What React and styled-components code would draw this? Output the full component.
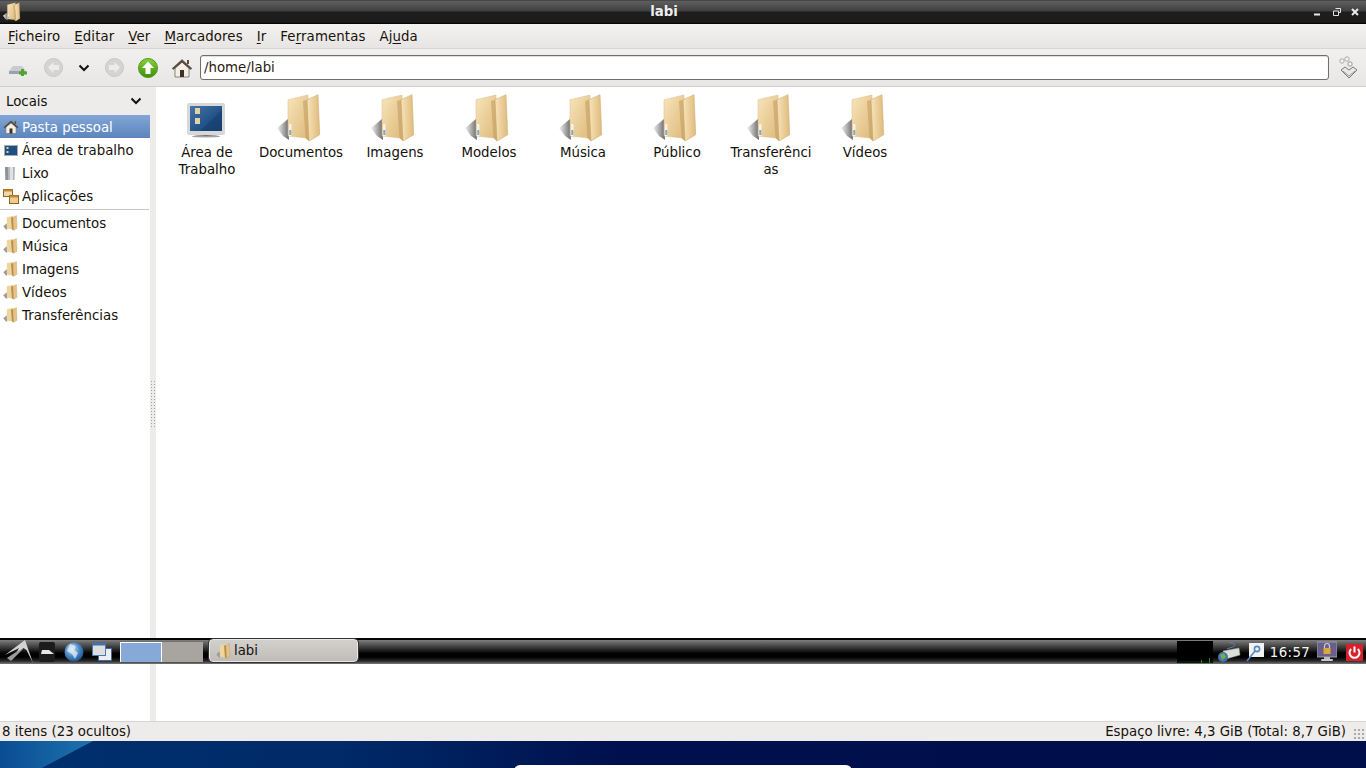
import React from "react";
import styled, { createGlobalStyle } from "styled-components";

const Global = createGlobalStyle`
  html, body { margin: 0; padding: 0; width: 1366px; height: 768px; overflow: hidden; background: #fff; }
  * { box-sizing: border-box; }
  body { font-family: "DejaVu Sans", sans-serif; font-size: 13.33px; color: #101010; }
  #root { height: 768px; }
`;

const Screen = styled.div`position: relative; width: 1366px; height: 768px; display: flex; flex-direction: column; overflow: hidden;`;
const Win = styled.div`height: 741px; display: flex; flex-direction: column; background: #edecea;`;

const TitleBar = styled.header`
  height: 24px; flex: none; position: relative; display: flex; align-items: center; justify-content: center; padding: 0 38px 2px 0;
  background: linear-gradient(#2f2f2f 0, #5e5e5e 1px, #565656 4px, #3f3f3f 11px, #1e1e1e 12px, #1c1c1c 22px, #000 24px);
  color: #eee; font-weight: 700; font-size: 13.33px;
`;
const TitleIcon = styled.span`position: absolute; left: 3px; top: 2px; display: flex;`;
const WinButtons = styled.div`position: absolute; right: 7px; top: 7px; display: flex; gap: 10px; align-items: center;`;

const MenuBar = styled.nav`
  height: 25px; flex: none; display: flex; align-items: center; padding: 1px 0 0 1px;
  background: linear-gradient(#f3f2f1, #e6e5e3); border-bottom: 1px solid #d6d5d2;
`;
const MenuItem = styled.span`
  padding: 0 7px; line-height: 22px; white-space: pre; color: #1a1208; letter-spacing: .1px;
  u { text-underline-offset: 2px; text-decoration-thickness: 1px; }
`;

const ToolBar = styled.div`
  height: 38px; flex: none; display: flex; align-items: center; background: linear-gradient(#f1f0ee, #e8e7e5); border-bottom: 1px solid #d0cfcc;
  padding: 0 0 0 8px;
`;
const ToolIcon = styled.span`display: flex; width: ${p => p.$w}px; margin-left: ${p => p.$gap || 0}px; justify-content: center; flex: none;`;
const PathEntry = styled.div`
  flex: 1; height: 25px; margin-left: 1px; border: 1px solid #6f6e6b; border-radius: 3px; background: #fff;
  padding-left: 3px; line-height: 24px; color: #2a1a10; box-shadow: inset 0 1px 1px #ddd;
`;

const Body = styled.div`flex: 1; display: flex; min-height: 0;`;
const Side = styled.aside`width: 150px; flex: none; background: #fff; display: flex; flex-direction: column;`;
const SideHead = styled.div`
  height: 28px; flex: none; display: flex; align-items: center; justify-content: space-between; background: #edecea; padding: 1px 8px 0 6px;
  svg { margin-top: -2px; }
`;
const SideRow = styled.div`
  height: 23px; flex: none; display: flex; align-items: center; gap: 3px; padding: 2px 0 0 3px; white-space: nowrap;
  ${p => p.$on ? "background: linear-gradient(#82a6d6, #5b85bd); color: #fff;" : "color: #16120c;"}
`;
const SideIcon = styled.span`display: flex; width: 16px; height: 16px; flex: none; margin-top: -2px;`;
const Separator = styled.hr`margin: 2px 0 1px 0; width: 149px; height: 1px; border: 0; background: #c6c6c6; flex: none;`;

const Handle = styled.div`width: 6px; flex: none; background: #edecea; display: flex; align-items: center; justify-content: center;`;
const Grip = styled.span`
  width: 6px; height: 48px;
  background-image: radial-gradient(#a5a4a1 0.8px, transparent 1px);
  background-size: 3px 3px;
`;

const Grid = styled.main`flex: 1; background: #fff; display: flex; align-items: flex-start; padding: 6px 0 0 4px;`;
const Item = styled.div`width: 94px; flex: none; display: flex; flex-direction: column; align-items: center; text-align: center;`;
const ItemIcon = styled.span`display: flex; height: 50px; width: 48px; justify-content: center;`;
const ItemLabel = styled.span`width: 88px; margin-top: 1px; line-height: 17px; overflow-wrap: anywhere; color: #14100a;`;

const Status = styled.footer`
  height: 20px; flex: none; display: flex; justify-content: space-between; align-items: center;
  padding: 0 20px 0 2px; background: #edecea; border-top: 1px solid #d6d5d2; position: relative; color: #15110b;
`;
const ResizeGrip = styled.span`
  position: absolute; right: 1px; bottom: 1px; width: 12px; height: 12px;
  background-image: radial-gradient(#aaa 0.8px, transparent 1px); background-size: 4px 4px;
`;

const Wallpaper = styled.div`
  flex: 1; position: relative; overflow: hidden; display: flex; justify-content: center;
  background: linear-gradient(90deg, #00306e 0%, #002a68 25%, #00104e 45%, #000e4a 100%);
`;
const Swoosh = styled.span`
  position: absolute; left: 0; top: 0; width: 93px; height: 27px;
  background: linear-gradient(90deg, #0a4d92, #1c72ae); clip-path: polygon(0 0, 100% 0, 45% 100%, 0 100%);
`;
const Pill = styled.span`position: absolute; left: 514px; top: 24px; width: 338px; height: 6px; background: #fff; border-radius: 6px 6px 0 0;`;

const Panel = styled.div`
  position: absolute; left: 0; top: 638px; width: 1366px; height: 26px; display: flex; align-items: center;
  border-top: 2px solid #050505;
  background: linear-gradient(#7f7f7f 0, #6b6b6b 2px, #2b2b2b 9px, #040404 13px, #000 17px, #2a2a2a 21px, #7a7a7a 24px);
  color: #eee;
`;
const PanelLeft = styled.div`display: flex; align-items: center; width: 120px; flex: none;`;
const PanelIcon = styled.span`display: flex; flex: none; width: ${p => p.$w}px; justify-content: center;`;
const Desk = styled.span`
  width: ${p => p.$w}px; height: 20px; flex: none; margin-top: -1px;
  background: ${p => p.$on ? "#87a9d8" : "#a8a5a1"};
  ${p => p.$on ? "border: 1px solid #fff; border-bottom: 0;" : ""}
`;
const TaskButton = styled.div`
  width: 149px; height: 23px; margin-left: 6px; margin-top: -3px; display: flex; align-items: center; gap: 2px; padding-left: 6px;
  border: 1px solid #e8e8e6; border-radius: 4px; color: #15110b; flex: none;
  background: linear-gradient(#d2d0cd, #c0bdb9); box-shadow: 0 0 0 1px #333;
`;
const Tray = styled.div`margin-left: auto; display: flex; align-items: center; height: 100%;`;
const CpuGraph = styled.span`display: flex; width: 36px; height: 22px; background: #000; margin-top: -1px; flex: none;`;
const Clock = styled.span`width: 46px; padding-left: 2px; text-align: center; color: #f4f4f4; flex: none; letter-spacing: .4px;`;

const FolderDefs = () => (
  <defs>
    <linearGradient id="fb" x1="0" x2="1" y1="0" y2="1"><stop offset="0" stopColor="#f8e4bb" /><stop offset="1" stopColor="#dcb877" /></linearGradient>
    <linearGradient id="ff" x1="0" x2="1" y1="0" y2="0"><stop offset="0" stopColor="#f7e3b9" /><stop offset="1" stopColor="#dfbb7c" /></linearGradient>
    <linearGradient id="fs" x1="0" x2="1" y1="0" y2="0"><stop offset="0" stopColor="#f4f4f4" /><stop offset="1" stopColor="#6a6a6a" /></linearGradient>
  </defs>
);

const Folder = ({ size = 48 }) => (
  <svg width={size} height={size * 50 / 48} viewBox="0 0 48 50">
    <path d="M0 35 L11 26 L12 47 L6 43 Z" fill="url(#fs)" />
    <path d="M11 6.7 L31 2 L32 48 L29 45 L11 43 Z" fill="url(#fb)" stroke="#d8bd86" strokeWidth=".5" />
    <path d="M30 6.7 L41 1.7 L42.7 41.7 L32 48 Z" fill="url(#ff)" stroke="#cfae70" strokeWidth=".6" />
    <path d="M26 8 L30 6.7 L32 48 L28.5 45 Z" fill="#c39f62" opacity=".6" />
    <rect x="12" y="31" width="2.5" height="12" fill="#f7f2e6" />
    <rect x="12.3" y="37" width="2" height="5" fill="#7fa6cf" />
  </svg>
);

const SmallFolder = () => (
  <svg width="16" height="16" viewBox="0 0 48 50">
    <path d="M0 35 L11 26 L12 47 L6 43 Z" fill="#9a9a9a" />
    <path d="M11 6.7 L31 2 L32 48 L29 45 L11 43 Z" fill="#efd49c" />
    <path d="M30 6.7 L41 1.7 L42.7 41.7 L32 48 Z" fill="#e4c384" stroke="#b8944f" strokeWidth="1" />
    <path d="M24 8 L30 6.7 L32 48 L27 45 Z" fill="#a8803f" opacity=".8" />
  </svg>
);

const Home = ({ s = 22, white }) => (
  <svg width={s} height={s} viewBox="0 0 22 22">
    <path d="M4 11 V20 H18 V11 L11 5 Z" fill={white ? "#f4f2ee" : "#f3efe6"} stroke="#6e6a62" strokeWidth=".8" />
    <path d="M1 11.5 L11 2.5 L21 11.5 L19.4 12.5 L11 5.3 L2.6 12.5 Z" fill="#5a4d3e" stroke="#4a4036" strokeWidth=".4" />
    <rect x="16" y="3" width="2" height="4" fill="#5a4d3e" />
    <rect x="9" y="13" width="4" height="7" fill="#3d3128" />
  </svg>
);

const Round = ({ dir }) => (
  <svg width="19" height="19" viewBox="0 0 19 19">
    <circle cx="9.5" cy="9.5" r="9" fill="#d5d4d2" stroke="#c8c7c5" />
    <path d={dir === "l" ? "M4 9.5 L9.5 4 V7 H15 V12 H9.5 V15 Z" : "M15 9.5 L9.5 4 V7 H4 V12 H9.5 V15 Z"} fill="#ecebe9" />
  </svg>
);

const Up = () => (
  <svg width="20" height="20" viewBox="0 0 20 20">
    <defs><linearGradient id="up" x1="0" x2="0" y1="0" y2="1"><stop offset="0" stopColor="#86d23e" /><stop offset="1" stopColor="#3f8d0c" /></linearGradient></defs>
    <circle cx="10" cy="10" r="9.5" fill="url(#up)" stroke="#4c9a15" />
    <path d="M10 3.5 L16 10 H12.5 V16 H7.5 V10 H4 Z" fill="#fafdf5" />
  </svg>
);

const Chevron = ({ color = "#111" }) => (
  <svg width="12" height="8" viewBox="0 0 12 8"><path d="M1.5 1.5 L6 6 L10.5 1.5" fill="none" stroke={color} strokeWidth="2" /></svg>
);

const NewTab = () => (
  <svg width="22" height="16" viewBox="0 0 22 16">
    <path d="M1 11 L5 6 H14 L18 11 V14 H1 Z" fill="#c8ccd2" />
    <path d="M1 11 H18 V14 H1 Z" fill="#9aa2ae" />
    <path d="M13 9 H16 V11.5 H19 V14.5 H16 V16 H13 V14.5 H11 V11.5 H13 Z" fill="#4da52f" />
  </svg>
);

const Monitor = ({ s = 48 }) => (
  <svg width={s} height={s} viewBox="0 0 48 48">
    <defs><linearGradient id="sc" x1="0" x2="1" y1="0" y2="1"><stop offset="0" stopColor="#4a75a6" /><stop offset=".55" stopColor="#24558a" /><stop offset="1" stopColor="#16406f" /></linearGradient>
    <linearGradient id="sh" x1="0" x2="0" y1="0" y2="1"><stop offset="0" stopColor="#555" /><stop offset="1" stopColor="#eee" /></linearGradient></defs>
    <rect x="4" y="10" width="38" height="32" rx="2" fill="#d8d8d8" />
    <rect x="7" y="13" width="32" height="25" fill="url(#sc)" />
    <path d="M17 38 L39 17 V38 Z" fill="#153d6e" opacity=".6" />
    <rect x="12" y="15" width="5" height="6" fill="#e0d2a8" />
    <rect x="12" y="25" width="5" height="6" fill="#e0d2a8" />
    <ellipse cx="23" cy="43.5" rx="14" ry="1.5" fill="url(#sh)" />
  </svg>
);

const SmallMonitor = () => (
  <svg width="16" height="16" viewBox="0 0 16 16">
    <rect x="1" y="3" width="14" height="11" fill="#a4adb6" />
    <rect x="2" y="4" width="12" height="9" fill="#1f4f80" />
    <rect x="3.5" y="5" width="2" height="2" fill="#d9cfa7" /><rect x="3.5" y="9" width="2" height="2" fill="#d9cfa7" />
  </svg>
);

const Trash = () => (
  <svg width="16" height="16" viewBox="0 0 16 16">
    <path d="M2 2 H12 L11.5 15 H2.5 Z" fill="#b4b8bb" />
    <path d="M2 2 H5 V15 H2.5 Z" fill="#8d9296" />
    <path d="M7 2 H10 V15 H7 Z" fill="#dfe1e3" />
  </svg>
);

const Apps = () => (
  <svg width="16" height="16" viewBox="0 0 16 16">
    <rect x=".5" y="1.5" width="9" height="7" fill="#f0d9a8" stroke="#8f6420" />
    <rect x=".5" y="1.5" width="9" height="2" fill="#c58a35" />
    <rect x="6.5" y="7.5" width="9" height="8" fill="#eccb8f" stroke="#8f6420" />
    <rect x="6.5" y="7.5" width="9" height="2" fill="#c58a35" />
  </svg>
);

const Throbber = () => (
  <svg width="20" height="24" viewBox="0 0 20 24">
    <circle cx="4" cy="5" r="2.2" fill="#f3f3f2" stroke="#aaa" />
    <circle cx="9" cy="3" r="2.2" fill="#f3f3f2" stroke="#aaa" />
    <circle cx="12" cy="8" r="2.2" fill="#f3f3f2" stroke="#999" />
    <path d="M3 14 L7 11 L11 14 L15 11 L19 14 L11 22 Z" fill="#e8e8e6" stroke="#777" />
    <path d="M5 15 L11 20 L17 15" fill="none" stroke="#999" />
  </svg>
);

const WinMin = () => <svg width="10" height="10" viewBox="0 0 10 10"><rect x="1" y="6.5" width="6" height="2" fill="#e8e8e8" /></svg>;
const WinMax = () => <svg width="8" height="8" viewBox="0 0 8 8"><path d="M2.5 .5 H7.5 V4.5 H5.5 M.5 3 H5.5 V7.5 H.5 Z" fill="none" stroke="#e4e4e4" /></svg>;
const WinClose = () => <svg width="8" height="8" viewBox="0 0 8 8"><path d="M1 1 L7 7 M7 1 L1 7" stroke="#eaeaea" strokeWidth="2" /></svg>;

const Arch = () => (
  <svg width="32" height="24" viewBox="0 0 32 24">
    <path d="M4 15 L24 0 L32 23 L25.5 10 L22.5 8 L14 15 L18 8 Z" fill="#d4d4d4" />
    <path d="M10 21 L22 9 L16.5 11 L6 18 Z" fill="#9a9a9a" />
  </svg>
);
const Drive = () => (
  <svg width="16" height="22" viewBox="0 0 16 22">
    <rect x="0" y="1" width="16" height="20" rx="2" fill="#1c1c1c" />
    <path d="M2 13 L3 9 H10 L15 13 Z" fill="#e8e8e8" />
  </svg>
);
const Globe = () => (
  <svg width="20" height="20" viewBox="0 0 20 20">
    <defs><radialGradient id="gl" cx=".4" cy=".35" r=".75"><stop offset="0" stopColor="#d5e6f5" /><stop offset=".5" stopColor="#4a8ac8" /><stop offset="1" stopColor="#17457e" /></radialGradient></defs>
    <circle cx="10" cy="10" r="9.5" fill="url(#gl)" />
    <path d="M6 2 L12 4 L10 8 L14 11 L11 17 L8 12 L3 9 Z" fill="#e4edf5" opacity=".75" />
  </svg>
);
const Windows = () => (
  <svg width="20" height="18" viewBox="0 0 20 18">
    <rect x="6.5" y="5.5" width="13" height="12" fill="#eee" stroke="#3a6aa8" />
    <rect x=".5" y=".5" width="13" height="12" fill="#dedede" stroke="#4a78b4" />
    <rect x=".5" y=".5" width="13" height="2" fill="#3d6fb0" />
  </svg>
);
const Network = () => (
  <svg width="24" height="22" viewBox="0 0 24 22">
    <path d="M6 10 L22 7 L23 14 L9 18 Z" fill="#dcdedc" stroke="#999" strokeWidth=".5" />
    <path d="M10 8 C14 6 20 6 17 3 C15 1 12 2 12 2" fill="none" stroke="#5b84ad" />
    <circle cx="6" cy="16" r="5" fill="#3f77ad" />
    <path d="M3 14 L7 12 L9 16 L5 19 Z" fill="#7ea94b" />
  </svg>
);
const Key = () => (
  <svg width="18" height="20" viewBox="0 0 18 20">
    <rect x="3" y="1" width="15" height="14" fill="#f2f2f0" />
    <path d="M1 19 L9 9" stroke="#5a86c4" strokeWidth="1.6" />
    <circle cx="11" cy="7" r="2.6" fill="none" stroke="#5a86c4" strokeWidth="1.6" />
  </svg>
);
const Lock = () => (
  <svg width="20" height="22" viewBox="0 0 20 22">
    <rect x="0" y="1" width="20" height="15" fill="#6b5e8a" stroke="#a09ca8" />
    <rect x="7" y="16" width="6" height="2" fill="#bbb" />
    <rect x="4" y="18" width="12" height="2" rx="1" fill="#c9c9c9" />
    <path d="M7.5 7 V5 a2.5 2.5 0 0 1 5 0 V7" fill="none" stroke="#ccc" strokeWidth="1.2" />
    <rect x="6.5" y="7" width="7" height="6" fill="#d9a93c" />
  </svg>
);
const Power = () => (
  <svg width="17" height="17" viewBox="0 0 17 17">
    <rect width="17" height="17" fill="#d8202a" />
    <path d="M5.2 5 A5 5 0 1 0 11.8 5" fill="none" stroke="#fff" strokeWidth="2" />
    <rect x="7.5" y="2.5" width="2" height="6" fill="#fff" />
  </svg>
);
const CpuBars = () => (
  <svg width="36" height="22" viewBox="0 0 36 22">
    <path d="M1 21 H36" stroke="#0c3a0c" strokeWidth="1" />
    <rect x="24" y="19" width="1" height="3" fill="#1f8a1f" />
    <rect x="32" y="17" width="1" height="5" fill="#1f8a1f" />
  </svg>
);

const Mn = ({ k, rest, pre = "" }) => <MenuItem>{pre}<u>{k}</u>{rest}</MenuItem>;

const folders = ["Documentos", "Imagens", "Modelos", "Música", "Público", "Transferências", "Vídeos"];
const places = ["Documentos", "Música", "Imagens", "Vídeos", "Transferências"];

export default function App() {
  return (
    <Screen>
      <Global />
      <svg width="0" height="0" style={{ position: "absolute" }}><FolderDefs /></svg>
      <Win>
        <TitleBar>
          <TitleIcon><Folder size={19} /></TitleIcon>
          labi
          <WinButtons><WinMin /><WinMax /><WinClose /></WinButtons>
        </TitleBar>
        <MenuBar>
          <Mn k="F" rest="icheiro" />
          <Mn k="E" rest="ditar" />
          <Mn k="V" rest="er" />
          <Mn k="M" rest="arcadores" />
          <Mn k="I" rest="r" />
          <Mn pre="Fe" k="r" rest="ramentas" />
          <Mn pre="Aj" k="u" rest="da" />
        </MenuBar>
        <ToolBar>
          <ToolIcon $w={22}><NewTab /></ToolIcon>
          <ToolIcon $w={35} $gap={6}><Round dir="l" /></ToolIcon>
          <ToolIcon $w={25}><Chevron /></ToolIcon>
          <ToolIcon $w={36}><Round dir="r" /></ToolIcon>
          <ToolIcon $w={32}><Up /></ToolIcon>
          <ToolIcon $w={35}><Home /></ToolIcon>
          <PathEntry>/home/labi</PathEntry>
          <ToolIcon $w={37}><Throbber /></ToolIcon>
        </ToolBar>
        <Body>
          <Side>
            <SideHead>Locais<Chevron /></SideHead>
            <SideRow $on><SideIcon><Home s={16} /></SideIcon>Pasta pessoal</SideRow>
            <SideRow><SideIcon><SmallMonitor /></SideIcon>Área de trabalho</SideRow>
            <SideRow><SideIcon><Trash /></SideIcon>Lixo</SideRow>
            <SideRow><SideIcon><Apps /></SideIcon>Aplicações</SideRow>
            <Separator />
            {places.map(p => <SideRow key={p}><SideIcon><SmallFolder /></SideIcon>{p}</SideRow>)}
          </Side>
          <Handle><Grip /></Handle>
          <Grid>
            <Item><ItemIcon><Monitor /></ItemIcon><ItemLabel>Área de Trabalho</ItemLabel></Item>
            {folders.map(f => <Item key={f}><ItemIcon><Folder /></ItemIcon><ItemLabel>{f}</ItemLabel></Item>)}
          </Grid>
        </Body>
        <Status>
          <span>8 itens (23 ocultos)</span>
          <span>Espaço livre: 4,3 GiB (Total: 8,7 GiB)</span>
          <ResizeGrip />
        </Status>
      </Win>
      <Wallpaper>
        <Swoosh />
        <Pill />
      </Wallpaper>
      <Panel>
        <PanelLeft>
          <PanelIcon $w={34}><Arch /></PanelIcon>
          <PanelIcon $w={26}><Drive /></PanelIcon>
          <PanelIcon $w={28}><Globe /></PanelIcon>
          <PanelIcon $w={28}><Windows /></PanelIcon>
        </PanelLeft>
        <Desk $on $w={42} />
        <Desk $w={41} />
        <TaskButton><SmallFolder />labi</TaskButton>
        <Tray>
          <CpuGraph><CpuBars /></CpuGraph>
          <PanelIcon $w={31}><Network /></PanelIcon>
          <PanelIcon $w={22}><Key /></PanelIcon>
          <Clock>16:57</Clock>
          <PanelIcon $w={30}><Lock /></PanelIcon>
          <PanelIcon $w={24}><Power /></PanelIcon>
        </Tray>
      </Panel>
    </Screen>
  );
}
